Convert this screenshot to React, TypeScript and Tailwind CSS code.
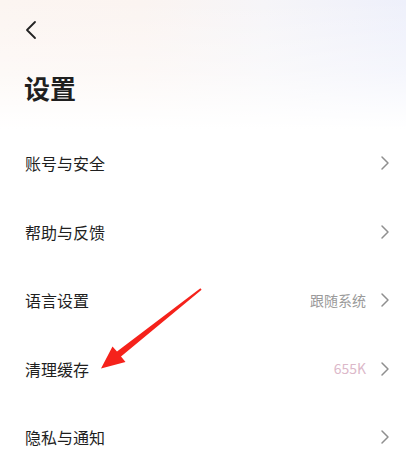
import React from "react";

type Row = { label: string; value?: string; valueClass?: string };

const rows: Row[] = [
  { label: "账号与安全" },
  { label: "帮助与反馈" },
  { label: "语言设置", value: "跟随系统", valueClass: "text-[#9a9a9a]" },
  { label: "清理缓存", value: "655K", valueClass: "text-[#dcb8c9]" },
  { label: "隐私与通知" },
];

function Chevron() {
  return (
    <svg width="10" height="16" viewBox="0 0 10 16" fill="none">
      <path d="M2 2l6 6-6 6" stroke="#8f8f8f" strokeWidth="1.5" strokeLinecap="round" strokeLinejoin="round" />
    </svg>
  );
}

export default function App() {
  return (
    <div
      className="relative w-[406px] h-[468px] overflow-hidden bg-white text-[#1f1f1f]"
      style={{ fontFamily: '"Noto Sans CJK SC", "Noto Sans", sans-serif' }}
    >
      <div className="bg-[linear-gradient(to_bottom,rgba(255,255,255,0)_0%,rgba(255,255,255,0.4)_55%,#fff_100%),linear-gradient(to_right,#fcf5f1_0%,#fbf4f1_35%,#f6f5f8_65%,#eef0fb_100%)]">
        <div className="h-[60px] flex items-center pl-[22px]">
          <svg width="18" height="20" viewBox="0 0 18 20" fill="none">
            <path d="M13 2L5 10l8 8" stroke="#222" strokeWidth="1.8" strokeLinecap="round" strokeLinejoin="round" />
          </svg>
        </div>
        <div className="h-[69px] pl-[24px] pt-[10px]">
          <h1 className="text-[26px] leading-[36px] font-bold">设置</h1>
        </div>
      </div>
      <div>
        {rows.map((r) => (
          <div key={r.label} className="h-[68.5px] flex items-center pl-[25px] pr-[16px]">
            <span className="flex-1 text-[16px]">{r.label}</span>
            {r.value && <span className={`text-[14px] mr-[14px] ${r.valueClass}`}>{r.value}</span>}
            <Chevron />
          </div>
        ))}
      </div>
      <svg className="absolute left-0 top-0 pointer-events-none" width="406" height="468" viewBox="0 0 406 468">
        <polygon
          points="200.4,288.3 201.6,289.7 121,356.5 125.5,362 101,368.5 112.5,346.5 117,351.5"
          fill="#f5221b"
        />
      </svg>
    </div>
  );
}
